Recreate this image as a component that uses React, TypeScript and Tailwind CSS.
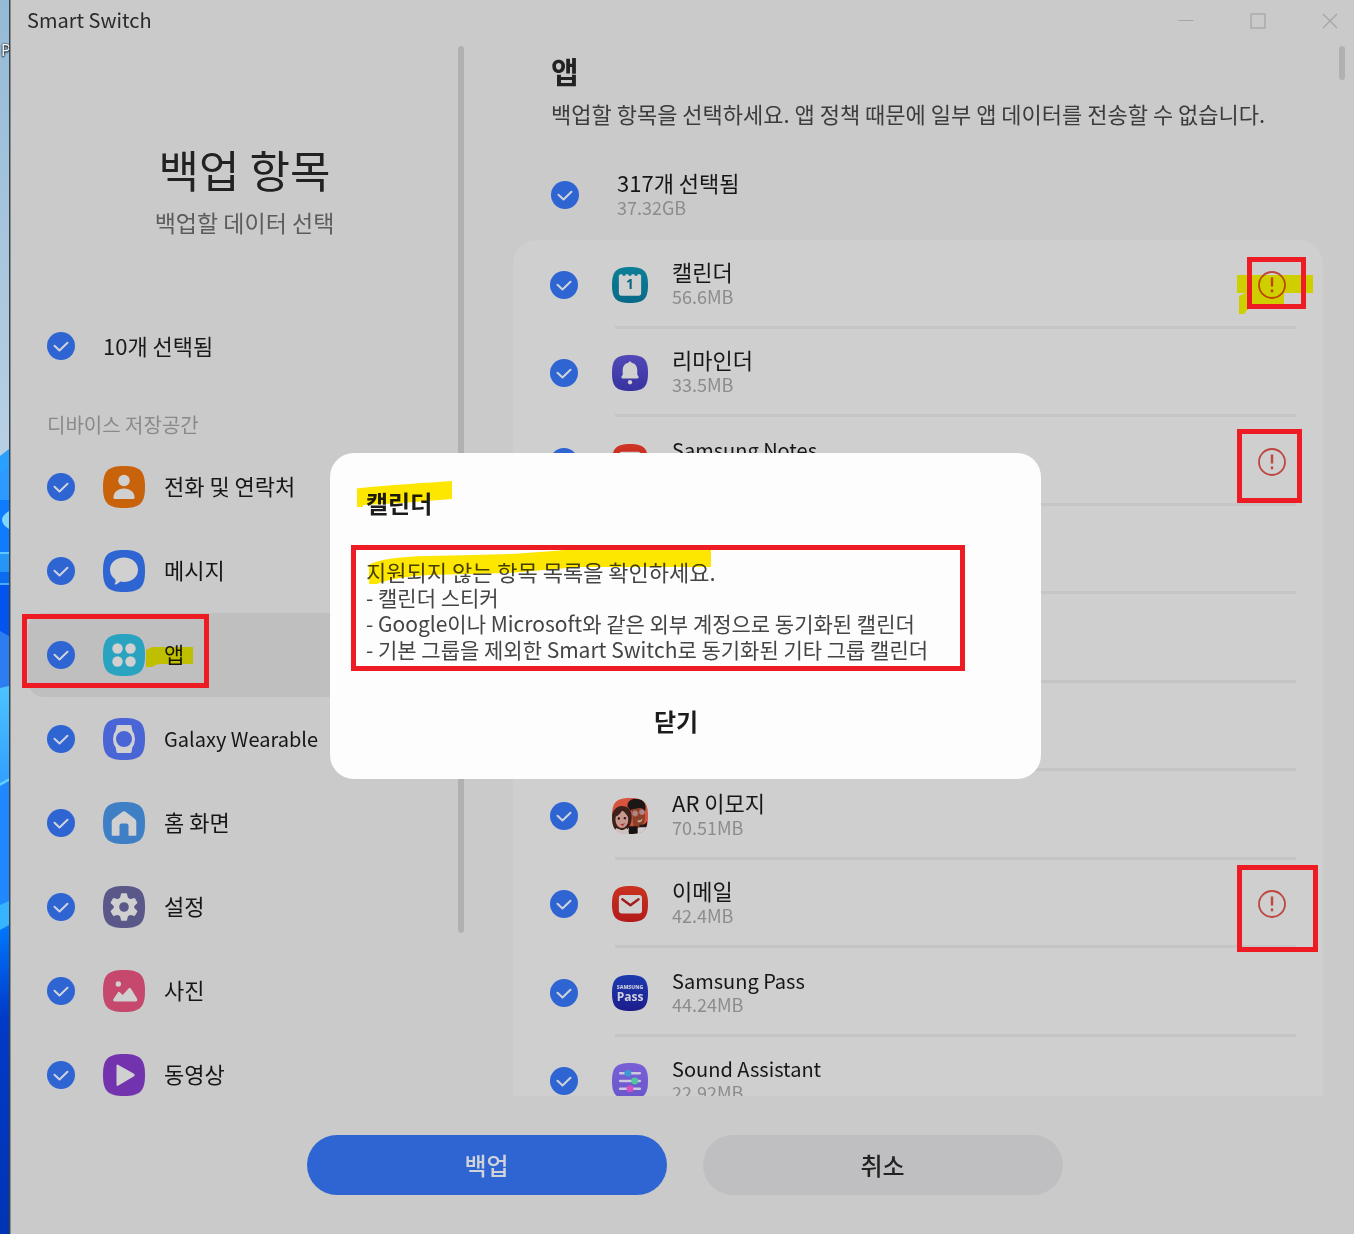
import { useState, type ReactNode } from "react";
import clsx from "clsx";

type Category = {
  id: string;
  name: string;
  color: string;
  glyph: ReactNode;
  latin?: boolean;
};

type AppItem = {
  id: string;
  name?: string;
  size?: string;
  icon?: ReactNode;
  latin?: boolean;
  note?: ReactNode;
};

const SQUIRCLE = "M21 0C37 0 42 5 42 21S37 42 21 42 0 37 0 21 5 0 21 0Z";

const CATEGORIES: Category[] = [
  {
    id: "contacts",
    name: "전화 및 연락처",
    color: "#c8630c",
    glyph: (
      <>
        <circle cx="21" cy="14.500" r="5.800" />
        <path d="M10.500 31.500C10.500 26 15 22.500 21 22.500S31.500 26 31.500 31.500C31.500 32.600 31 33 30 33H12C11 33 10.500 32.600 10.500 31.500Z" />
      </>
    ),
  },
  {
    id: "messages",
    name: "메시지",
    color: "#2e65d3",
    glyph: (
      <path d="M21 7.500C29 7.500 35 12.700 35 19.700S29 32 21 32C19.600 32 18.400 31.800 17.300 31.500 15.800 33 13.800 34.200 12.300 34.600 11.600 34.700 11.400 34.200 11.800 33.700 12.600 32.500 12.700 31 12.300 29.400 9 27.200 7 23.800 7 19.700 7 12.700 13 7.500 21 7.500Z" />
    ),
  },
  {
    id: "apps",
    name: "앱",
    color: "#29a3bf",
    glyph: (
      <>
        <circle cx="14.500" cy="14.500" r="5.200" />
        <circle cx="27.500" cy="14.500" r="5.200" />
        <circle cx="14.500" cy="27.500" r="5.200" />
        <circle cx="27.500" cy="27.500" r="5.200" />
      </>
    ),
  },
  {
    id: "wearable",
    name: "Galaxy Wearable",
    color: "#4a66d6",
    latin: true,
    glyph: (
      <>
        <path d="M14.500 7H27.500Q28.300 7 28.500 8L29.300 12.500Q32 16 32 21T29.300 29.500L28.500 34Q28.300 35 27.500 35H14.500Q13.700 35 13.500 34L12.700 29.500Q10 26 10 21T12.700 12.500L13.500 8Q13.700 7 14.500 7Z" />
        <circle cx="21" cy="21" r="8" fill="#4a66d6" />
      </>
    ),
  },
  {
    id: "home",
    name: "홈 화면",
    color: "#3f7fc6",
    glyph: (
      <path d="M19.500 9.700Q21 8.600 22.500 9.700L32 17Q33.300 18 33.300 19.500V33Q33.300 33.800 32.500 33.800H25.500V23.500Q25.500 21.500 23.500 21.500H18.500Q16.500 21.500 16.500 23.500V33.800H9.500Q8.700 33.800 8.700 33V19.500Q8.700 18 10 17Z" />
    ),
  },
  {
    id: "settings",
    name: "설정",
    color: "#5a5889",
    glyph: (
      <>
        <path
          d="M18.800 8H23.200L24.300 12.300 27.300 14 31.400 12.800 33.600 16.700 30.500 19.700V22.300L33.600 25.300 31.400 29.200 27.300 28 24.300 29.700 23.200 34H18.800L17.700 29.700 14.700 28 10.600 29.200 8.400 25.300 11.500 22.300V19.700L8.400 16.700 10.600 12.800 14.700 14 17.700 12.300Z"
          stroke="#d0d0d0"
          strokeWidth="1.500"
          strokeLinejoin="round"
        />
        <circle cx="21" cy="21" r="4.800" fill="#5a5889" />
      </>
    ),
  },
  {
    id: "photos",
    name: "사진",
    color: "#c6486c",
    glyph: (
      <>
        <circle cx="15.300" cy="14" r="2.700" />
        <path d="M10.500 29L15 22.300Q15.800 21.300 16.800 22.300L19.700 25 25.800 18.200Q26.800 17.200 27.700 18.300L34 28.500Q35.200 31.200 32.500 31.400H12Q9.300 31.400 10.500 29Z" />
      </>
    ),
  },
  {
    id: "videos",
    name: "동영상",
    color: "#7433ae",
    glyph: (
      <path d="M13.500 12Q13.500 9.800 15.400 10.900L31 19.800Q32.600 21 31 22.200L15.400 31.600Q13.500 32.600 13.500 30.500Z" />
    ),
  },
];

function CalendarIcon() {
  return (
    <AppIcon from="#0c7f97" to="#076a88">
      <path
        d="M8 10.500Q8 8.500 10 8.500H12A2 2 0 0 0 16 8.500H19A2 2 0 0 0 23 8.500H26A2 2 0 0 0 30 8.500H32Q34 8.500 34 10.500V31Q34 33.500 31.500 33.500H10.500Q8 33.500 8 31Z"
        fill="#d0d0d0"
      />
      <text
        x="21"
        y="26"
        textAnchor="middle"
        fill="#07657f"
        className="font-['Open_Sans',sans-serif] text-[16px] font-bold"
      >
        1
      </text>
    </AppIcon>
  );
}

function ReminderIcon() {
  return (
    <AppIcon from="#5248b8" to="#3733a0">
      <path
        d="M21 7.500C22 7.500 22.500 8.200 23 9 27.500 10 29.500 13.500 29.500 18V23L31 25.500Q31.500 27.500 29.500 27.500H12.500Q10.500 27.500 11 25.500L12.500 23V18C12.500 13.500 14.500 10 19 9 19.500 8.200 20 7.500 21 7.500Z"
        fill="#d0d0d0"
      />
      <circle cx="21" cy="31.800" r="2.500" fill="#d0d0d0" />
    </AppIcon>
  );
}

function NotesIcon() {
  return (
    <AppIcon from="#cf3524" to="#b8231c">
      <rect x="8.500" y="9" width="25" height="25" rx="3" fill="#d0d0d0" />
    </AppIcon>
  );
}

function EmojiIcon() {
  return (
    <svg viewBox="0 0 42 42" className="size-9 shrink-0" aria-hidden="true">
      <clipPath id="emoji-clip">
        <path d={SQUIRCLE} />
      </clipPath>
      <g clipPath="url(#emoji-clip)">
        <rect width="42" height="42" fill="#d6533f" />
        <path d="M0 35V42H42V33H32V35Z" fill="#d0d0d0" />
        {/* man with glasses */}
        <path d="M23 12H38.500V24Q38 32 31 34H25Z" fill="#8a4128" />
        <path
          d="M18 10C18 4 22 1 28 1 36 1 40 6 39 14L37.500 17C37 13 35 11 31 12 26 13.500 23 12 22 15Z"
          fill="#1d1616"
        />
        <circle cx="27" cy="18" r="3.200" fill="#a58a94" stroke="#c26a58" />
        <circle cx="35" cy="16.500" r="3" fill="#a58a94" stroke="#c26a58" />
        <path d="M29 26Q33 27 35.500 24 35.500 28 31 28.500Z" fill="#c9a79b" />
        <path d="M32 31Q38 32 41 27V34H32Z" fill="#2a1714" />
        <path d="M20 33H30V42H19Z" fill="#171313" />
        {/* woman */}
        <path
          d="M0 38V20C2 12 7 9 13 9.500 20 10 23 15 23 22 23 30 20 36 15 39L6 36Z"
          fill="#3d211d"
        />
        <ellipse cx="11.500" cy="25" rx="7.500" ry="10" fill="#c9988c" />
        <path d="M4 22C7 20 11 18 12 13 15 18 19 20 20 25V16L12 10 3 16Z" fill="#3d211d" />
        <circle cx="8" cy="24" r="1.400" fill="#2c1b19" />
        <circle cx="15" cy="23.500" r="1.400" fill="#2c1b19" />
        <path d="M9 30Q13 31 15 28.500 14 33 11.500 32.500Z" fill="#b23a37" />
        <path d="M5 35Q12 40 17 35L20 42H4Z" fill="#d0c3bf" />
      </g>
    </svg>
  );
}

function MailIcon() {
  return (
    <AppIcon from="#c9321f" to="#b31b1b">
      <rect x="8" y="10.500" width="27" height="21.500" rx="3.500" fill="#d0d0d0" />
      <path
        d="M12 15.500L21.500 22.500 31 15.500"
        fill="none"
        stroke="#a3191c"
        strokeWidth="2.800"
        strokeLinecap="round"
        strokeLinejoin="round"
      />
    </AppIcon>
  );
}

function PassIcon() {
  return (
    <AppIcon from="#1c3cb0" to="#1d1c8c">
      <text
        x="21"
        y="16"
        textAnchor="middle"
        fill="#c4c8dc"
        className="font-['Open_Sans',sans-serif] text-[6px] font-extrabold"
      >
        SAMSUNG
      </text>
      <text
        x="21"
        y="30"
        textAnchor="middle"
        fill="#cfd1de"
        className="font-['Open_Sans',sans-serif] text-[14px] font-bold"
      >
        Pass
      </text>
    </AppIcon>
  );
}

function SoundIcon() {
  return (
    <AppIcon from="#7a5fd6" to="#6a57cc">
      <path
        d="M9.500 12H32.500M9.500 21H32.500M9.500 30H32.500"
        stroke="#cbc8de"
        strokeWidth="2.800"
        strokeLinecap="round"
      />
      <circle cx="18.500" cy="12" r="4" fill="#3f97d4" />
      <circle cx="26.500" cy="21" r="4" fill="#4fc7a0" />
      <circle cx="21" cy="30" r="4" fill="#d44fc4" />
    </AppIcon>
  );
}

const APPS: AppItem[] = [
  {
    id: "calendar",
    name: "캘린더",
    size: "56.6MB",
    icon: <CalendarIcon />,
    note: (
      <>
        <svg
          viewBox="0 0 76 40"
          className="pointer-events-none absolute top-1 -left-[21px] z-10 h-10 w-[76px] max-w-none fill-[#ffff00] mix-blend-multiply"
          aria-hidden="true"
        >
          <path d="M0 0H76V18H47V29H22Q12 31 7 39H2V21L9 18H0Z" />
        </svg>
        <Frame className="-top-3.5 -left-[11px] h-[52px] w-[59px]" />
      </>
    ),
  },
  { id: "reminder", name: "리마인더", size: "33.5MB", icon: <ReminderIcon /> },
  {
    id: "notes",
    name: "Samsung Notes",
    latin: true,
    icon: <NotesIcon />,
    note: <Frame className="-top-[19px] -left-[21px] h-[74px] w-[65px]" />,
  },
  { id: "row-4" },
  { id: "row-5" },
  { id: "row-6" },
  { id: "ar-emoji", name: "AR 이모지", size: "70.51MB", icon: <EmojiIcon /> },
  {
    id: "email",
    name: "이메일",
    size: "42.4MB",
    icon: <MailIcon />,
    note: <Frame className="-top-[25px] -left-[21px] h-[87px] w-[81px]" />,
  },
  {
    id: "pass",
    name: "Samsung Pass",
    size: "44.24MB",
    latin: true,
    icon: <PassIcon />,
  },
  {
    id: "sound",
    name: "Sound Assistant",
    size: "22.92MB",
    latin: true,
    icon: <SoundIcon />,
  },
];

function AppIcon({
  from,
  to,
  children,
}: {
  from: string;
  to: string;
  children: ReactNode;
}) {
  const id = `fill-${from.slice(1)}`;

  return (
    <svg viewBox="0 0 42 42" className="size-9 shrink-0" aria-hidden="true">
      <linearGradient id={id} x1="0" y1="0" x2="0" y2="1">
        <stop offset="0" stopColor={from} />
        <stop offset="1" stopColor={to} />
      </linearGradient>
      <path d={SQUIRCLE} fill={`url(#${id})`} />
      {children}
    </svg>
  );
}

// red marker rectangle laid over a row or a button
function Frame({ className }: { className: string }) {
  return (
    <span
      className={clsx(
        "pointer-events-none absolute z-10 border-5 border-[#ed1c24]",
        className,
      )}
    />
  );
}

function Check({ label }: { label?: string }) {
  const [checked, setChecked] = useState(true);

  return (
    <span className="grid size-7 shrink-0 place-items-center">
      <input
        type="checkbox"
        checked={checked}
        onChange={(e) => setChecked(e.target.checked)}
        aria-label={label}
        className="size-7 cursor-pointer appearance-none rounded-full border border-[#8a8a8a] [grid-area:1/1] checked:border-0 checked:bg-[#2e65d3]"
      />
      {checked && (
        <svg
          viewBox="0 0 28 28"
          className="pointer-events-none size-7 fill-none stroke-[#d0d3da] stroke-2 [grid-area:1/1]"
          strokeLinecap="round"
          strokeLinejoin="round"
          aria-hidden="true"
        >
          <path d="M7.500 13.800L12.500 18.500 20.500 10.800" />
        </svg>
      )}
    </span>
  );
}

function Wallpaper() {
  return (
    <div className="relative w-[10px] shrink-0 overflow-hidden border-r border-[#34424e]">
      <svg
        viewBox="0 0 9 1234"
        preserveAspectRatio="none"
        className="size-full"
        aria-hidden="true"
      >
        <linearGradient id="sky" x1="0" y1="0" x2="0" y2="1">
          <stop offset="0" stopColor="#95bad6" />
          <stop offset="1" stopColor="#b8d0e4" />
        </linearGradient>
        <linearGradient id="petal" x1="0" y1="0" x2="0" y2="1">
          <stop offset="0" stopColor="#4cc4ff" />
          <stop offset="1" stopColor="#1070ff" />
        </linearGradient>
        <linearGradient id="deep" x1="0" y1="0" x2="0" y2="1">
          <stop offset="0" stopColor="#0078ff" />
          <stop offset="0.300" stopColor="#003ac8" />
          <stop offset="1" stopColor="#0034b4" />
        </linearGradient>
        <rect width="9" height="460" fill="url(#sky)" />
        <path d="M0 456L9 449V560H0Z" fill="#27a0ff" />
        <path d="M0 474L9 467V560H0Z" fill="#2c9aff" />
        <path d="M0 500H9V552H0Z" fill="#0d7cff" />
        <path d="M9 511Q-5 520 9 529Z" fill="#7fd6ff" />
        <rect y="552" width="9" height="32" fill="#2596f5" />
        <rect y="552" width="9" height="2" fill="#5cc8ff" />
        <rect y="572" width="9" height="12" fill="#0b6cf2" />
        <rect y="583" width="9" height="110" fill="#0354ee" />
        <rect y="583" width="9" height="2" fill="#4aaaff" />
        <path d="M0 631L9 636V693H0Z" fill="#2d7df2" />
        <path d="M0 688L9 686V906H0Z" fill="url(#petal)" />
        <path d="M0 783L9 778V906H0Z" fill="#1f88ff" />
        <path d="M0 783L9 778V781L0 786Z" fill="#62d0ff" />
        <path d="M0 905L9 901V925L0 932Z" fill="#35b4ff" />
        <path d="M0 930L9 925V1234H0Z" fill="url(#deep)" />
      </svg>
      <span className="absolute top-[42px] left-px font-['Open_Sans',sans-serif] text-[16px] leading-4 text-white [text-shadow:0_1px_2px_#000,0_0_2px_#000]">
        P
      </span>
    </div>
  );
}

function TitleBar() {
  return (
    <header className="flex h-[42px] shrink-0 items-center justify-between pl-4">
      <h1 className="pb-0.5 text-[20px] leading-7 text-[#2a2a2a]">Smart Switch</h1>
      <div className="flex gap-6 text-[#a6a6a6]">
        <button type="button" aria-label="최소화" className="flex h-10 w-12 items-center justify-center">
          <svg viewBox="0 0 16 16" className="size-4 fill-none stroke-current">
            <path d="M0.500 7.500H15.500" />
          </svg>
        </button>
        <button type="button" aria-label="최대화" className="flex h-10 w-12 items-center justify-center">
          <svg viewBox="0 0 16 16" className="size-4 fill-none stroke-current">
            <rect x="1" y="1" width="14" height="14" strokeWidth="1.300" />
          </svg>
        </button>
        <button type="button" aria-label="닫기" className="flex h-10 w-12 items-center justify-center">
          <svg viewBox="0 0 16 16" className="size-4 fill-none stroke-current">
            <path d="M1 1L15 15M15 1L1 15" strokeWidth="1.300" />
          </svg>
        </button>
      </div>
    </header>
  );
}

function Sidebar() {
  return (
    <aside className="flex w-[453px] shrink-0">
      <div className="min-w-0 flex-1 overflow-hidden pt-[97px]">
        <div className="pl-5 text-center">
          <h2 className="text-[44px] leading-[60px] text-[#222]">백업 항목</h2>
          <p className="mt-[7px] text-[23px] leading-8 text-[#5c5c5c]">백업할 데이터 선택</p>
        </div>

        <label className="mt-[88px] flex h-10 items-center gap-7 pl-9 text-[22px] text-[#1a1a1a]">
          <Check />
          <span className="pb-0.5">10개 선택됨</span>
        </label>

        <h3 className="mt-[45px] pl-9 text-[20px] leading-7 text-[#8a8a8a]">디바이스 저장공간</h3>

        <ul className="mt-1.5 pl-[17px]">
          {CATEGORIES.map((item) => (
            <li
              key={item.id}
              className={clsx(
                "relative h-[84px] rounded-2xl",
                item.id === "apps" && "bg-[#bfbfbf]",
              )}
            >
              <label className="flex h-full items-center gap-7 pl-[19px]">
                <Check />
                <span className="flex items-center gap-[19px]">
                  <svg viewBox="0 0 42 42" className="size-[42px] shrink-0" aria-hidden="true">
                    <path d={SQUIRCLE} fill={item.color} />
                    <g fill="#d0d0d0">{item.glyph}</g>
                  </svg>
                  <span
                    className={clsx(
                      "text-[#161616]",
                      item.latin ? "text-[20px]" : "pb-1 text-[22px]",
                    )}
                  >
                    {item.name}
                  </span>
                </span>
              </label>
              {item.id === "apps" && (
                <>
                  <svg
                    viewBox="0 0 47 22"
                    className="pointer-events-none absolute top-[34px] left-[118px] h-[22px] w-[47px] fill-[#ffff00] mix-blend-multiply"
                    aria-hidden="true"
                  >
                    <path d="M0 3L6 0H47V17H15Q10 17 6 20H0Z" />
                  </svg>
                  <Frame className="top-px -left-1.5 h-[74px] w-[187px]" />
                </>
              )}
            </li>
          ))}
        </ul>
      </div>
      <div className="flex w-1.5 shrink-0 pt-1 pb-[163px]">
        <div className="flex-1 rounded-full bg-[#b1b1b1]" />
      </div>
    </aside>
  );
}

function AppRow({ item }: { item: AppItem }) {
  return (
    <li className="flex flex-col">
      <div className="flex min-h-0 flex-1 items-center justify-between px-[37px] pt-1">
        {item.name && (
          <label className="flex items-center">
            <Check />
            <span className="ml-[34px] flex items-center gap-6">
              {item.icon}
              <span className="flex flex-col pb-1.5">
                <span
                  className={clsx(
                    "h-7 text-[#161616]",
                    item.latin ? "text-[20px] leading-8" : "text-[22px] leading-7",
                  )}
                >
                  {item.name}
                </span>
                <span className="h-[22px] text-[18px] leading-[22px] text-[#8c8c8e]">
                  {item.size}
                </span>
              </span>
            </span>
          </label>
        )}
        {item.note && (
          <button
            type="button"
            aria-label={`${item.name} 안내`}
            className="relative size-7 shrink-0 text-[#bd463f]"
          >
            <svg viewBox="0 0 28 28" className="size-7" aria-hidden="true">
              <circle cx="14" cy="14" r="13" fill="none" stroke="currentColor" strokeWidth="1.800" />
              <path d="M12.800 6.500H15.200V15.500H12.800ZM12.800 18.500H15.200V21.200H12.800Z" fill="currentColor" />
            </svg>
            {item.note}
          </button>
        )}
      </div>
      <div className="mr-[27px] ml-[102px] h-[3px] bg-[#c5c5c5]" />
    </li>
  );
}

function AppPanel() {
  return (
    <section className="flex min-w-0 flex-1 pl-[49px]">
      <div className="flex min-w-0 flex-1 flex-col pt-2.5">
        <div className="shrink-0 pl-[38px]">
          <h2 className="text-[30px] leading-9 font-bold text-[#222]">앱</h2>
          <p className="mt-2.5 text-[22px] leading-[30px] whitespace-nowrap text-[#3c3c3c]">
            백업할 항목을 선택하세요. 앱 정책 때문에 일부 앱 데이터를 전송할 수 없습니다.
          </p>
          <label className="mt-10 flex items-center gap-[38px]">
            <Check />
            <span className="flex flex-col pb-1">
              <span className="text-[22px] leading-7 text-[#161616]">317개 선택됨</span>
              <span className="text-[18px] leading-[22px] text-[#8c8c8e]">37.32GB</span>
            </span>
          </label>
        </div>
        <div className="mt-[18px] min-h-0 flex-1 overflow-hidden rounded-t-3xl bg-[#cfcfcf]">
          <ul className="grid h-[885px] grid-rows-10">
            {APPS.map((item) => (
              <AppRow key={item.id} item={item} />
            ))}
          </ul>
        </div>
      </div>
      <div className="flex w-[31px] shrink-0 justify-end pt-1 pr-[9px]">
        <div className="h-[34px] w-1.5 rounded-full bg-[#b1b1b1]" />
      </div>
    </section>
  );
}

function NoticeDialog() {
  return (
    <div className="absolute inset-0 z-20 flex items-center justify-center pb-0.5 pl-1.5">
      <div
        role="dialog"
        aria-labelledby="notice-title"
        className="w-[711px] rounded-3xl bg-[#fdfdfd] pt-[34px] pr-[55px] pb-[38px] pl-9"
      >
        <div className="relative">
          <h2 id="notice-title" className="text-[24px] leading-8 font-bold text-[#1c1c1c]">
            캘린더
          </h2>
          <svg
            viewBox="0 0 95 27"
            className="pointer-events-none absolute -top-1.5 -left-[9px] h-[27px] w-[95px] fill-[#ffe800] mix-blend-multiply"
            aria-hidden="true"
          >
            <path d="M0 7.500Q10 6 45 3.500T95 0V18L45 22 6 24V26H0Z" />
          </svg>
        </div>
        <div className="relative mt-[39px] leading-[26px] text-[#444]">
          <p className="text-[22px]">지원되지 않는 항목 목록을 확인하세요.</p>
          <ul className="text-[21px]">
            <li>- 캘린더 스티커</li>
            <li>- Google이나 Microsoft와 같은 외부 계정으로 동기화된 캘린더</li>
            <li>- 기본 그룹을 제외한 Smart Switch로 동기화된 기타 그룹 캘린더</li>
          </ul>
          <svg
            viewBox="0 0 342 34"
            className="pointer-events-none absolute -top-2 left-[3px] h-[34px] w-[342px] fill-[#ffe800] mix-blend-multiply"
            aria-hidden="true"
          >
            <path d="M0 15Q12 7 60 6T140 4Q160 3 195 0H342V17H210L140 23 60 25Q25 27 8 34H0Z" />
          </svg>
          <Frame className="-top-[13px] -left-[15px] h-[126px] w-[614px]" />
        </div>
        <button
          type="button"
          className="mx-auto mt-[39px] block h-10 px-6 text-[24px] leading-10 font-bold text-[#1c1c1c]"
        >
          닫기
        </button>
      </div>
    </div>
  );
}

export default function App() {
  return (
    <div className="flex h-screen overflow-hidden bg-[#cacaca] font-['Noto_Sans_CJK_KR',sans-serif]">
      <Wallpaper />
      <main className="relative flex min-w-0 flex-1 flex-col border-l border-[#8b8b8b]">
        <TitleBar />
        <div className="flex min-h-0 flex-1">
          <Sidebar />
          <AppPanel />
        </div>
        <footer className="flex h-[138px] shrink-0 items-center justify-center gap-9 pl-1">
          <button
            type="button"
            className="h-[60px] w-[360px] rounded-full bg-[#2e65d3] text-[24px] font-medium text-[#d0d3da]"
          >
            백업
          </button>
          <button
            type="button"
            className="h-[60px] w-[360px] rounded-full bg-[#bfbfc1] text-[24px] font-medium text-[#222]"
          >
            취소
          </button>
        </footer>
        <NoticeDialog />
      </main>
    </div>
  );
}
